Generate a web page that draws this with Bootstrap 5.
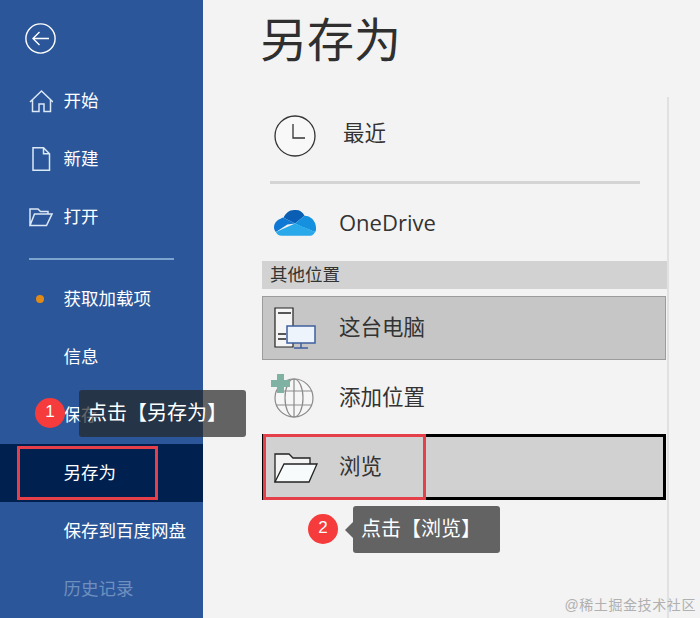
<!DOCTYPE html>
<html lang="zh-CN">
<head>
  <meta charset="UTF-8">
  <title>另存为</title>
  <link href="https://cdn.jsdelivr.net/npm/bootstrap@5.3.0/dist/css/bootstrap.min.css" rel="stylesheet">
  <style>
    html, body { height: 100%; }
    body {
      width: 700px; height: 618px; overflow: hidden; position: relative;
      background: #f3f3f3; color: #333;
      font-family: "Liberation Sans", "Noto Sans CJK SC", sans-serif;
    }
    .side { width: 203px; height: 618px; flex: none; background: #2b579a; color: #fff; font-size: 17.5px; overflow: hidden; }
    .back-btn { height: 72px; padding: 23px 0 0 25px; }
    .side-item { height: 58px; padding-left: 29px; }
    .side-ico { width: 34.5px; flex: none; }
    .side-item.active { background: #002050; }
    .side-item.faded { color: #6f8fbf; }
    .side-rule { height: 2px; width: 145px; margin: 12px 0 10px 29px; background: #7da3cf; }
    .dot-ico { width: 8px; height: 8px; margin-left: 7px; margin-right: 19.5px; border-radius: 50%; background: #e28a16; }
    .main-area { padding-left: 59px; flex: 1; }
    .page-title { height: 97px; margin: 0 0 0 -2px; font-size: 47px; font-weight: 400; line-height: 82px; color: #2f2f2f; }
    .place-list { width: 407px; height: 521px; border-right: 2px solid #e1e1e1; }
    .place-row { padding-left: 8px; font-size: 21.5px; }
    .place-ico { width: 69px; flex: none; }
    .row-recent { height: 74px; }
    .row-rule { height: 3px; margin: 10px 27px 0 8px; background: #d4d4d4; }
    .row-drive { height: 58px; margin-top: 9px; font-family: "Open Sans", sans-serif; font-size: 22px; }
    .place-head { height: 28px; margin-top: 10px; padding-left: 8px; background: #d2d2d2; font-size: 17.5px; line-height: 28px; color: #333; }
    .row-pc { height: 64px; margin-top: 7px; width: 404px; background: #c6c6c6; border: 1px solid #9c9c9c; padding-left: 7px; }
    .row-add { height: 60px; margin-top: 8px; }
    .row-browse { height: 66px; margin-top: 6px; padding-top: 1px; width: 404px; background: #d1d1d1; border: 3px solid #000; padding-left: 5px; }
    .mark-box { position: absolute; border: 3px solid #e5404a; }
    .mark-save { left: 17px; top: 446px; width: 141px; height: 54px; }
    .mark-browse { left: 263px; top: 434px; width: 163px; height: 66px; }
    .step-dot {
      position: absolute; width: 30px; height: 30px; border-radius: 50%;
      background: #f53b3b; color: #fff; font-size: 17px; line-height: 28px; text-align: center;
    }
    .step-tip {
      position: absolute; height: 47px; padding-left: 8px; border-radius: 3px;
      background: rgba(37, 37, 37, .7); color: #fff; font-size: 20px; line-height: 47px; white-space: nowrap;
    }
    .tip-save { left: 79px; top: 390px; width: 167px; }
    .tip-browse { left: 353px; top: 506px; width: 147px; background: #636363; }
    .tip-browse::before {
      content: ""; position: absolute; left: -8px; top: 16px;
      border-style: solid; border-width: 8px 8px 8px 0; border-color: transparent #636363 transparent transparent;
    }
    .mark-water { position: absolute; right: 4px; top: 594px; font-size: 14px; line-height: 22px; letter-spacing: .6px; color: #b0b0b0; }
  </style>
</head>
<body class="d-flex">

  <aside class="side">
    <div class="back-btn">
      <svg width="31" height="31" viewBox="0 0 31 31" fill="none" stroke="#fff" stroke-width="1.4"><circle cx="15.5" cy="15.5" r="14.6"/><path d="M24 15.5H8M14.5 9l-6.5 6.5 6.5 6.5"/></svg>
    </div>
    <div class="side-item d-flex align-items-center">
      <span class="side-ico"><svg width="24" height="24" viewBox="0 0 24 24" fill="none" stroke="#dbe8f6" stroke-width="1.5" class="d-block"><path d="M1 13L12.500 2 24 13M3.500 11v11.500h6.500V15h5v7.500h6.500V11"/></svg></span>
      <span>开始</span>
    </div>
    <div class="side-item d-flex align-items-center">
      <span class="side-ico"><svg width="24" height="24" viewBox="0 0 24 24" fill="none" stroke="#dbe8f6" stroke-width="1.5" class="d-block"><path d="M4 .8h10.500l6 6v16.400H4zM14.500 .8v6h6"/></svg></span>
      <span>新建</span>
    </div>
    <div class="side-item d-flex align-items-center">
      <span class="side-ico"><svg width="24" height="20" viewBox="0 0 24 20" fill="none" stroke="#dbe8f6" stroke-width="1.5" class="d-block"><path d="M1 18.500V2h8l2.500 2.500H19v2.500M1 18.500L5.500 7H23l-5.500 11.500z"/></svg></span>
      <span>打开</span>
    </div>
    <div class="side-rule"></div>
    <div class="side-item d-flex align-items-center">
      <span class="dot-ico"></span>
      <span>获取加载项</span>
    </div>
    <div class="side-item d-flex align-items-center"><span class="side-ico"></span><span>信息</span></div>
    <div class="side-item d-flex align-items-center"><span class="side-ico"></span><span>保存</span></div>
    <div class="side-item active d-flex align-items-center"><span class="side-ico"></span><span>另存为</span></div>
    <div class="side-item d-flex align-items-center"><span class="side-ico"></span><span>保存到百度网盘</span></div>
    <div class="side-item faded d-flex align-items-center"><span class="side-ico"></span><span>历史记录</span></div>
  </aside>

  <main class="main-area">
    <h1 class="page-title">另存为</h1>
    <div class="place-list">
      <div class="place-row row-recent d-flex align-items-center">
        <span class="place-ico"><svg width="42" height="42" viewBox="0 0 42 42" fill="#f8f8f8" stroke="#333" stroke-width="1.300" class="d-block ms-1 mt-1"><circle cx="21" cy="21" r="20"/><path d="M19 9v14h12" fill="none"/></svg></span>
        <span class="ms-1">最近</span>
      </div>
      <div class="row-rule"></div>
      <div class="place-row row-drive d-flex align-items-center">
        <span class="place-ico"><svg width="42" height="27" viewBox="0 0 44 28" class="d-block ms-1"><path d="M10 9c2-5 7-9 13-8 4 0 7 2 9 6l-10 8-12-6z" fill="#0a5fb4"/><path d="M10 9c-1 0-2 0-3 1C3 11 0 15 0 19c0 2 1 4 2 5l12-8 8-1z" fill="#0f78d4"/><path d="M32 7c6 0 12 5 12 13 0 1 0 3-1 4l-15-6-6-3z" fill="#1490df"/><path d="M22 15L2 24c1 2 3 4 6 4h30c2 0 4-2 5-4z" fill="#29a8ea"/></svg></span>
        <span>OneDrive</span>
      </div>
      <div class="place-head">其他位置</div>
      <div class="place-row row-pc d-flex align-items-center">
        <span class="place-ico"><svg width="44" height="42" viewBox="0 0 44 42" fill="none" class="d-block ms-1"><path d="M1 1h18v39H1z" fill="#f5f5f5" stroke="#222" stroke-width="1.200"/><path d="M4 6h13M4 27h8M4 32h8" stroke="#222" stroke-width="1.300"/><path d="M13 19h28v17H13z" fill="#eef4fb" stroke="#3f5f9f" stroke-width="1.500"/><path d="M27 36v5M20 41h14" stroke="#3f5f9f" stroke-width="1.500"/></svg></span>
        <span>这台电脑</span>
      </div>
      <div class="place-row row-add d-flex align-items-center">
        <span class="place-ico"><svg width="44" height="50" viewBox="0 0 44 50" fill="none" class="d-block"><circle cx="24" cy="25" r="19" fill="#f6f6f6" stroke="#8b8b8b" stroke-width="1.200"/><ellipse cx="24" cy="25" rx="9" ry="19" stroke="#8b8b8b" stroke-width="1.200"/><path d="M24 6v38M6 18h36M6 32h36" stroke="#8b8b8b" stroke-width="1.200"/><path d="M7 1h7v6h6v7h-6v6H7v-6H1V7h6z" fill="#7fb2a2"/></svg></span>
        <span>添加位置</span>
      </div>
      <div class="place-row row-browse d-flex align-items-center">
        <span class="place-ico"><svg width="44" height="32" viewBox="0 0 44 32" fill="none" stroke="#222" stroke-width="1.300" class="d-block ms-1"><path d="M1 30V2h14l4 4h17v6" fill="#f4f4f4"/><path d="M1 30l9-18h33l-8 18z" fill="#f8fbfb"/></svg></span>
        <span>浏览</span>
      </div>
    </div>
  </main>

  <div class="mark-box mark-save"></div>
  <div class="mark-box mark-browse"></div>
  <div class="step-tip tip-save">点击【另存为】</div>
  <div class="step-dot" style="left:35px;top:398px">1</div>
  <div class="step-tip tip-browse">点击【浏览】</div>
  <div class="step-dot" style="left:308px;top:514px">2</div>
  <div class="mark-water">@稀土掘金技术社区</div>

  <script src="https://cdn.jsdelivr.net/npm/bootstrap@5.3.0/dist/js/bootstrap.bundle.min.js"></script>
</body>
</html>
